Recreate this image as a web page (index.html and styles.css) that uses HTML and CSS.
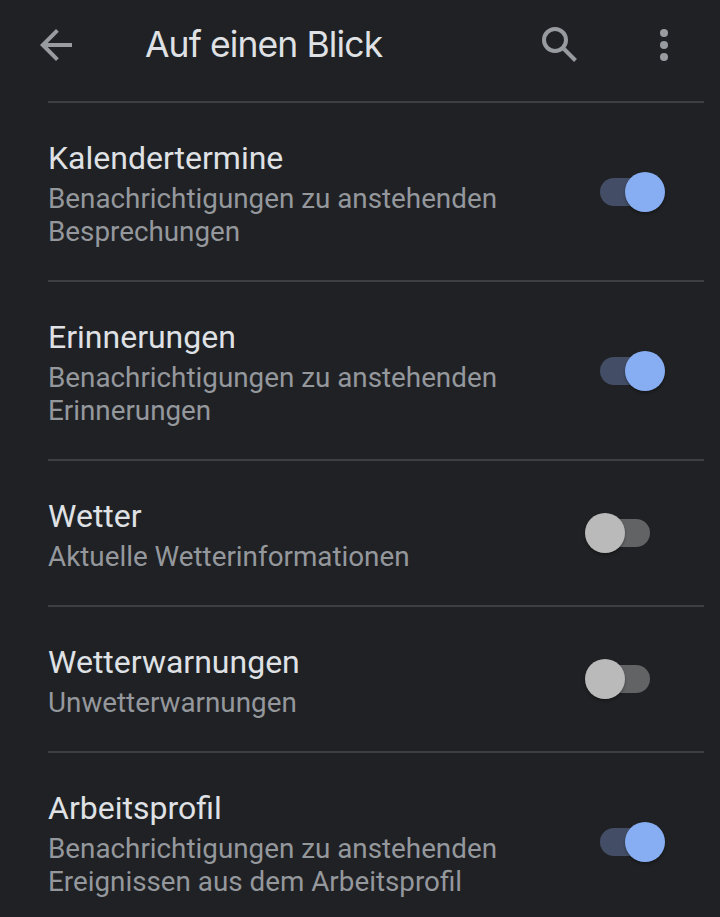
FILE: index.html
```html
<!DOCTYPE html>
<html lang="de">
<head>
    <meta charset="UTF-8">
    <meta name="viewport" content="width=device-width, initial-scale=1.0">
    <title>Auf einen Blick</title>
    <link rel="stylesheet" href="styles.css">
</head>
<body>
    <div class="header">
        <svg class="back" viewBox="0 0 32 32"><path d="M32 14H7.7L18.8 2.8 16 0 0 16l16 16 2.8-2.8L7.7 18H32z"/></svg>
        <h1>Auf einen Blick</h1>
        <svg class="search" viewBox="0 0 35 35"><circle cx="13" cy="13" r="11"/><path d="M22 22l11.5 11.5"/></svg>
        <svg class="more" viewBox="0 0 8 32"><circle cx="4" cy="4" r="4"/><circle cx="4" cy="16" r="4"/><circle cx="4" cy="28" r="4"/></svg>
    </div>
    <ul class="list">
        <li>
            <div class="text">
                <h2>Kalendertermine</h2>
                <p>Benachrichtigungen zu anstehenden<br>Besprechungen</p>
            </div>
            <div class="switch on"></div>
        </li>
        <li>
            <div class="text">
                <h2>Erinnerungen</h2>
                <p>Benachrichtigungen zu anstehenden<br>Erinnerungen</p>
            </div>
            <div class="switch on"></div>
        </li>
        <li>
            <div class="text">
                <h2>Wetter</h2>
                <p>Aktuelle Wetterinformationen</p>
            </div>
            <div class="switch"></div>
        </li>
        <li>
            <div class="text">
                <h2>Wetterwarnungen</h2>
                <p>Unwetterwarnungen</p>
            </div>
            <div class="switch"></div>
        </li>
        <li>
            <div class="text">
                <h2>Arbeitsprofil</h2>
                <p>Benachrichtigungen zu anstehenden<br>Ereignissen aus dem Arbeitsprofil</p>
            </div>
            <div class="switch on"></div>
        </li>
    </ul>
</body>
</html>
```
FILE: styles.css
```css
*{
    padding: 0;
    margin: 0;
    list-style: none;
    box-sizing: border-box;
}
body{
    height: 917px;
    overflow: hidden;
    background-color: #202124;
    color: #dfe1e5;
    font-family: Roboto, sans-serif;
}
.header{
    display: flex;
    height: 101px;
    padding: 0 52px 12px 40px;
    align-items: center;
}
.header svg{
    flex: none;
    fill: #989ca1;
}
.header h1{
    flex: 1;
    padding: 1px 0 0 73px;
    font: 400 35.5px/44px Inter, sans-serif;
    letter-spacing: -0.9px;
    white-space: nowrap;
}
.back{
    width: 32px;
    height: 32px;
}
.header .search{
    width: 35px;
    height: 35px;
    fill: none;
    stroke: #989ca1;
    stroke-width: 4;
}
.more{
    width: 8px;
    height: 32px;
    margin-left: 83px;
}
/* rows */
.list{
    padding: 0 16px 0 48px;
}
.list li{
    display: flex;
    justify-content: space-between;
    align-items: center;
    border-top: 2px solid #3e3f42;
    padding: 36px 54px 32px 0;
}
.text h2{
    font-size: 32px;
    font-weight: 400;
    line-height: 38px;
    padding-bottom: 5px;
}
.text p{
    color: #94989d;
    font-size: 27.8px;
    line-height: 33px;
}
/* switch */
.switch{
    display: flex;
    align-items: center;
    width: 50px;
    height: 28px;
    margin-bottom: 4px;
    border-radius: 14px;
    background-color: #626365;
}
.switch::before{
    content: "";
    flex: none;
    width: 40px;
    height: 40px;
    margin-left: -15px;
    border-radius: 50%;
    background-color: #bababa;
    box-shadow: 0 2px 3px rgba(0,0,0,0.3);
}
.switch.on{
    background-color: #434e66;
}
.switch.on::before{
    margin-left: 25px;
    background-color: #87aef3;
}
```
